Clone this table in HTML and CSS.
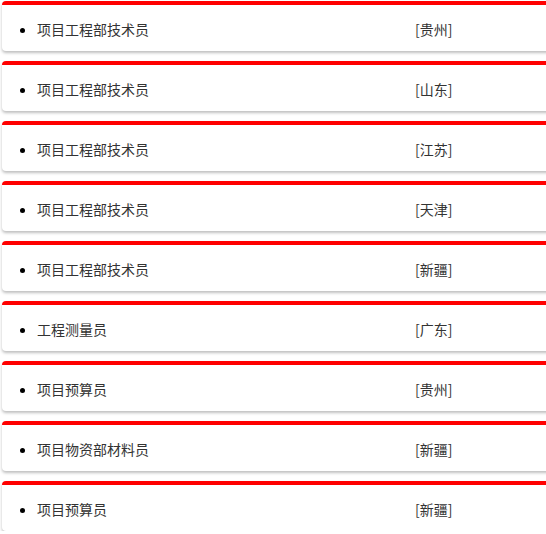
FILE: index.html
```html
<!DOCTYPE html>
<html lang="zh-CN">
<head>
<meta charset="utf-8">
<title>职位列表</title>
<link rel="stylesheet" href="styles.css">
</head>
<body>
<div class="list">
  <div class="card"><ul><li><span class="title">项目工程部技术员</span><span class="loc">[贵州]</span></li></ul></div>
  <div class="card"><ul><li><span class="title">项目工程部技术员</span><span class="loc">[山东]</span></li></ul></div>
  <div class="card"><ul><li><span class="title">项目工程部技术员</span><span class="loc">[江苏]</span></li></ul></div>
  <div class="card"><ul><li><span class="title">项目工程部技术员</span><span class="loc">[天津]</span></li></ul></div>
  <div class="card"><ul><li><span class="title">项目工程部技术员</span><span class="loc">[新疆]</span></li></ul></div>
  <div class="card"><ul><li><span class="title">工程测量员</span><span class="loc">[广东]</span></li></ul></div>
  <div class="card"><ul><li><span class="title">项目预算员</span><span class="loc">[贵州]</span></li></ul></div>
  <div class="card"><ul><li><span class="title">项目物资部材料员</span><span class="loc">[新疆]</span></li></ul></div>
  <div class="card"><ul><li><span class="title">项目预算员</span><span class="loc">[新疆]</span></li></ul></div>
</div>
</body>
</html>
```
FILE: styles.css
```css
html, body {
  margin: 0;
  padding: 0;
  background: #fff;
  overflow: hidden;
}
body {
  font-family: "Noto Sans CJK SC", "Liberation Sans", sans-serif;
  font-size: 14px;
  color: #333;
}
.list {
  display: flex;
  flex-direction: column;
  gap: 10px;
  padding-top: 1px;
  margin-left: 2px;
  margin-right: -20px;
}
.card {
  height: 45px;
  padding-top: 1px;
  border-top: 4px solid #f00;
  border-radius: 4px;
  background: #fff;
  box-shadow: 0 2px 3px rgba(0, 0, 0, 0.25);
  display: flex;
  align-items: center;
}
.card ul {
  margin: 0;
  padding-left: 35px;
  list-style: disc;
}
.card li {
  display: list-item;
  line-height: 20px;
}
.card li::marker {
  color: #000;
}
.title {
  display: inline-block;
  width: 378px;
}
.loc {
  display: inline-block;
}
```
